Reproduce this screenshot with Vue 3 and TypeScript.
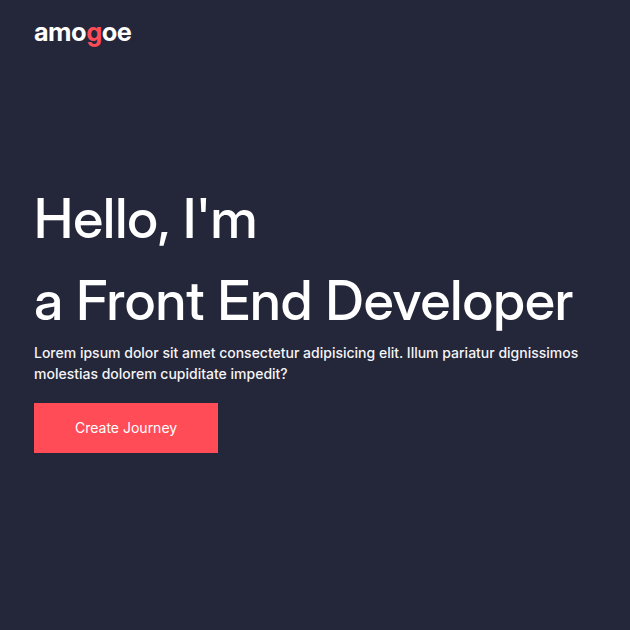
<script setup lang="ts">
const greeting: string = "Hello, I'm"
const role: string = 'a Front End Developer'
</script>

<template>
  <div class="page">
    <header class="header">
      <a class="logo" href="#">amo<span class="accent">g</span>oe</a>
    </header>
    <main class="hero">
      <h1 class="title">
        <span class="line">{{ greeting }}</span>
        <span class="line">{{ role }}</span>
      </h1>
      <p class="intro">
        Lorem ipsum dolor sit amet consectetur adipisicing elit. Illum pariatur dignissimos molestias dolorem cupiditate impedit?
      </p>
      <button class="cta" type="button">Create Journey</button>
    </main>
  </div>
</template>

<style>
body {
  margin: 0;
  background: #24263a;
}
</style>

<style scoped>
.page {
  display: flex;
  flex-direction: column;
  box-sizing: border-box;
  min-height: 100vh;
  padding: 0 34px;
  background: #24263a;
  color: #fff;
  font-family: Inter, 'Liberation Sans', sans-serif;
}

.header {
  padding-top: 16px;
}

.logo {
  color: inherit;
  font-family: 'Inter Display', Inter, sans-serif;
  font-size: 26px;
  font-weight: 700;
  line-height: 32px;
  text-decoration: none;
}

.accent {
  color: #ff4c57;
}

.hero {
  padding-top: 129px;
}

.title {
  margin: 0 0 1px;
  font-family: 'Inter Display', Inter, sans-serif;
  font-size: 55px;
  font-weight: 500;
  line-height: 82px;
}

.line {
  display: block;
}

.intro {
  margin: 0 0 19px;
  color: #f4f4f6;
  font-size: 14px;
  font-weight: 500;
  line-height: 21px;
}

.cta {
  padding: 0 41px;
  border: 0;
  background: #ff4c57;
  color: #fff;
  font: inherit;
  font-size: 14px;
  line-height: 50px;
  cursor: pointer;
}
</style>
